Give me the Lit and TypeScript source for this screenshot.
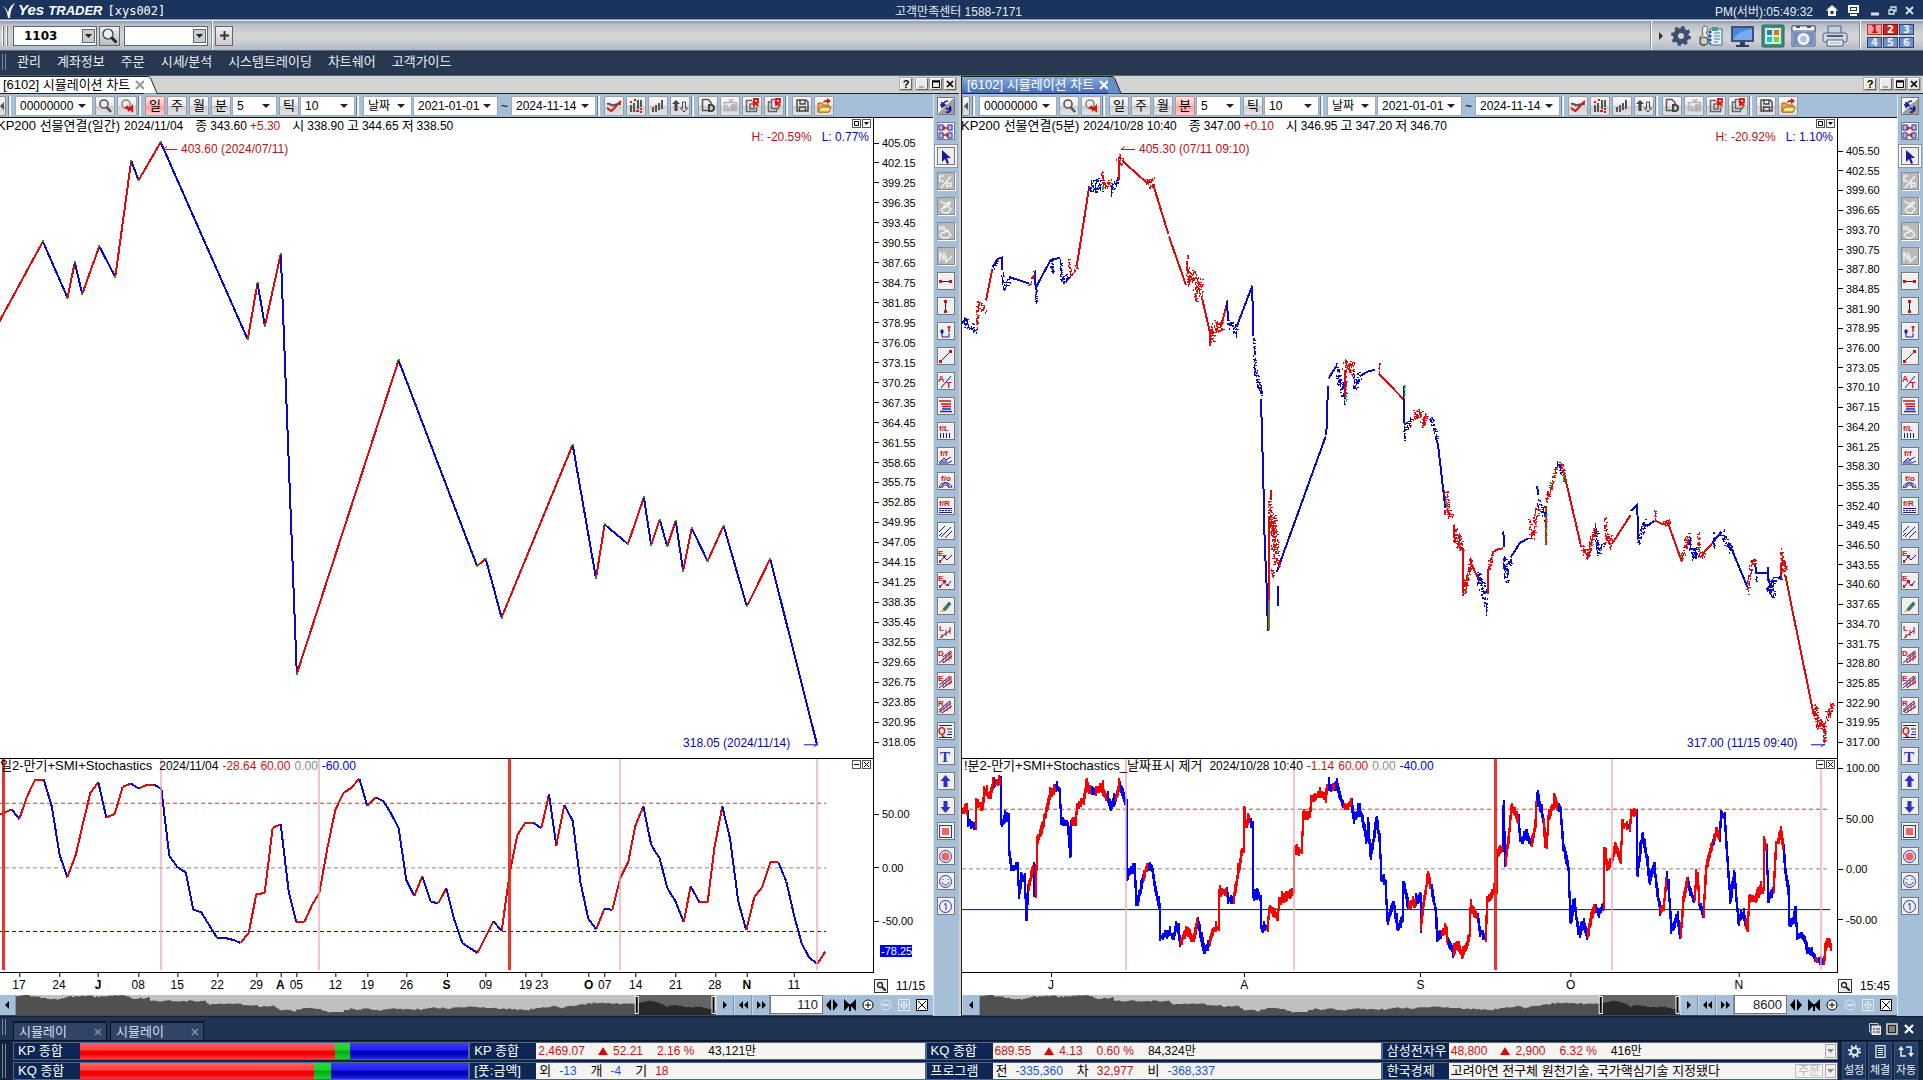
import { LitElement, html, svg, css, nothing } from "lit";
import { customElement, property } from "lit/decorators.js";
import { classMap } from "lit/directives/class-map.js";

const RED = "#e00808";
const BLUE = "#0808c8";

/* ---------- shared styles ---------- */
const base = css`
  * { box-sizing: border-box; }
  button, select, input {
    font: inherit; margin: 0; padding: 0; border: 0; border-radius: 0; color: inherit;
    background: none; appearance: none; outline: none; min-width: 0;
  }
  button { display: inline-flex; align-items: center; justify-content: center; flex: none; }
  a { color: inherit; text-decoration: none; }
  svg { display: block; flex: none; }
`;

/* ---------- icons ---------- */
const icon = (w: number, h: number, body: unknown) =>
  html`<svg width=${w} height=${h} viewBox="0 0 ${w} ${h}" fill="none" aria-hidden="true">${body}</svg>`;

const magnifier = (c = "#555") => svg`
  <circle cx="6" cy="5" r="4" stroke=${c} stroke-width="1.6" fill="#eee"/>
  <path d="M9 8.5L13 13" stroke=${c} stroke-width="2.6"/>`;

const triangle = (d: string) => svg`<path d=${d} fill="#000"/>`;

const tool = {
  search: icon(14, 14, magnifier()),
  searchRed: icon(14, 14, svg`${magnifier("#888")}<path d="M4 9l4-3v2h2l3-3v8l-3-2-2 2V11z" fill="#e01010"/>`),
  trend: icon(16, 14, svg`<path d="M1 5c3-1 4 2 7 1s4-1 7-1" stroke="#555" stroke-width="2"/><path d="M1 9l4 3c3-1 4-5 10-10" stroke="#d01818" stroke-width="2"/>`),
  barsDots: icon(14, 14, svg`<path d="M2 6v7M5 4v9M9 1v9M12 1v7" stroke="#555" stroke-width="2"/><path d="M1 3h2M5 1h2M7 12h3M11 10h2M11 13h2" stroke="#e01818" stroke-width="2"/>`),
  bars: icon(14, 14, svg`<path d="M2 8v5M5 6v7M8 4v7M11 1v9" stroke="#555" stroke-width="2"/>`),
  updown: icon(16, 14, svg`<path d="M4 12V3" stroke="#444" stroke-width="3"/><path d="M0 5l4-4 4 4z" fill="#444"/><path d="M10.500 3h3v6h2l-3.500 4-3.500-4h2z" stroke="#444"/>`),
  pageD: icon(15, 15, svg`<path d="M8 12.500H1.500v-11H7l3 3V7" stroke="#555" stroke-width="1.500"/><path d="M8 7v6h2c4 0 4-6 0-6z" stroke="#444" stroke-width="2"/>`),
  tvR: icon(15, 15, svg`<path d="M6 1l2 3 2-3M1.500 4.500h12v8h-12zM4 7v4h3" stroke="#b5b5b5" stroke-width="1.500"/><path d="M9 13V7h3v3H9l4 3" stroke="#aaa" stroke-width="1.500"/>`),
  pageR: icon(15, 15, svg`<path d="M7 2.500H1.500v11h10V9M8 6H5v5h4V8" stroke="#666" stroke-width="1.500"/><path d="M9 8V1h4v3.500H9l4.500 3.500" stroke="#e01010" stroke-width="1.800"/>`),
  pagesR: icon(15, 15, svg`<path d="M8 1.500H4.500v9h7V8M4 4H1.500v9.500h8V11" stroke="#666" stroke-width="1.500"/><path d="M9 8V1h4v3.500H9l4.500 3.500" stroke="#e01010" stroke-width="1.800"/>`),
  save: icon(13, 13, svg`<path d="M1 1h9l2 2v9H1zM4 1v4h5V1M3.500 12V8h6v4" stroke="#444" stroke-width="1.400"/>`),
  open: icon(15, 15, svg`<path d="M1 14V5h4l1 2h6v7z" fill="#e8b040" stroke="#a06810"/><path d="M1 14l3-5h10l-2 5z" fill="#ffe38a" stroke="#a06810"/><path d="M6 5c0-3 3-3 4-3V0l4 3-4 3V4C8 4 7 4 6 5z" fill="#e01010"/>`),
};

const N = "#1a1a9c";
const R = "#cc1414";
const letter = (s: string, x = 1, y = 8, c = R, size = 9) =>
  svg`<text x=${x} y=${y} font-size=${size} font-weight="700" fill=${c} font-family="Liberation Sans">${s}</text>`;
const gray = (b: unknown) => svg`<g stroke="#f2f2f2" stroke-width="1.400">${b}</g>`;
const drawTools: { name: string; kind?: string; art: unknown }[] = [
  { name: "새로고침", kind: "split", art: svg`<path d="M2 6h6M4 3v5l3-2M5 8c0-3 1-6 5-6" stroke=${N} stroke-width="1.600"/><path d="M8 9l4 2v-4M12 8c2 3-1 6-4 5" stroke=${N} stroke-width="1.800"/>` },
  { name: "창 배열", art: svg`<rect x="1" y="1" width="4" height="5" stroke=${N}/><rect x="1" y="9" width="4" height="5" stroke=${N}/><rect x="10" y="1" width="4" height="5" stroke=${N}/><rect x="10" y="9" width="4" height="5" stroke=${N}/><path d="M3 0v15M12 0v15" stroke="#7b7bd0"/><path d="M5 4h5M5 11h5M6 2v4M9 9v4" stroke=${R} stroke-width="1.500"/>` },
  { name: "선택", kind: "on", art: svg`<path d="M4 1v12l3-3 2 5 2-1-2-5h4z" fill=${N}/>` },
  { name: "콜풋", kind: "off", art: gray(svg`<path d="M6 2H2v5h4M3 14L13 2M9 14V9h4v3H9"/>`) },
  { name: "지우기", kind: "off", art: gray(svg`<path d="M2 2l5 3 5-2v2L5 8M5 9l5-2 3 3-3 4H6l-3-3z"/>`) },
  { name: "손", kind: "off", art: gray(svg`<path d="M2 2v4M4 2v4M6 2v4h4M4 9l6-2 3 4-4 3H5l-3-3z"/>`) },
  { name: "패턴", kind: "off", art: gray(svg`<path d="M2 12V3l4 8V3M8 6v7l6-6"/>`) },
  { name: "수평선", art: svg`<path d="M2 7.500h11" stroke=${N}/><path d="M1 6h3v3H1zM11 6h3v3h-3z" fill=${R}/>` },
  { name: "수직선", art: svg`<path d="M7.500 2v11" stroke=${N}/><path d="M6 1h3v3H6zM6 11h3v3H6z" fill=${R}/>` },
  { name: "구간", art: svg`<path d="M4 9v4h7V9" stroke=${N}/><path d="M3 6h2v3H3z" fill=${N} stroke=${N}/><path d="M11 2v6M9.500 3h3" stroke=${R} stroke-width="1.500"/>` },
  { name: "추세선", art: svg`<path d="M3 12L12 3" stroke="#333"/><path d="M1 11h3v3H1zM11 1h3v3h-3z" fill=${R}/>` },
  { name: "각도선", art: svg`<path d="M3 14L13 2" stroke=${N}/>${letter("A", 0, 8)}${letter("T", 8, 14)}` },
  { name: "가로줄", art: svg`<path d="M1 2h12M3 5h10M4 7.500h9" stroke=${R} stroke-width="1.300"/><path d="M4 10h9M2 12.500h12" stroke="#2020e0" stroke-width="1.300"/>` },
  { name: "피보나치 시간", art: svg`${letter("f/L", 1, 7, R, 8)}<path d="M2.500 9v5M5.500 9v5M8.500 9v5M11.500 9v5" stroke=${N}/>` },
  { name: "피보나치 팬", art: svg`${letter("f/f", 2, 7, R, 8)}<path d="M1 14l5-5 2 2 5-3M1 14h9l4-2M3 12h6" stroke=${N}/>` },
  { name: "피보나치 호", art: svg`${letter("f/o", 3, 7, R, 8)}<path d="M1 14C2 7 13 7 14 14M4 14c1-4 6-4 7 0M7.500 8L2 14M7.500 8l5 6" stroke=${N}/>` },
  { name: "피보나치 되돌림", art: svg`${letter("f/R", 1, 7, R, 8)}<path d="M1 9.500h13M1 13.500h13" stroke=${N}/><path d="M1 11.500h13" stroke=${N} stroke-dasharray="2 1"/>` },
  { name: "평행선", art: svg`<path d="M1 8l6-6M3 13L13 3M7 14l7-7M1 12l3-3" stroke=${N}/>` },
  { name: "엘리어트 1", art: svg`${letter("E", 0, 7, R, 8)}<path d="M2 13l4-5 3 3 5-5" stroke=${N}/><path d="M1 11h2v3H1zM5 6h3v2H5z" fill=${R}/>` },
  { name: "엘리어트 2", art: svg`${letter("E", 0, 7, R, 8)}<path d="M2 13l4-5 3 4 4-5" stroke=${N}/><path d="M1 11h2v3H1zM5 6h3v3H5zM9 10h2v2H9z" fill=${R}/>` },
  { name: "펜", art: svg`<path d="M5 10l6-7 2 2-6 7z" fill="#2c8070" stroke="#666"/><path d="M2 13l3-3 2 2z" fill="#c9a030"/>` },
  { name: "선형회귀 L", art: svg`${letter("L", 1, 7, R, 8)}<path d="M2 14l5-4 6-4" stroke=${N}/><path d="M4 10v4M8 6v6M12 3v7" stroke=${R}/>` },
  { name: "선형회귀 D", art: svg`${letter("D", 0, 7, R, 8)}<path d="M1 14L13 4M5 8l8-6M5 14l9-7" stroke=${N}/><path d="M5 9v5M8 5v8M11 3v9M13 2v8" stroke=${R}/>` },
  { name: "선형회귀 E", art: svg`${letter("E", 0, 7, R, 8)}<path d="M1 14L13 4M1 11L12 2M5 14l9-7" stroke=${N}/><path d="M5 8v5M8 5v7M11 3v8M13 2v8" stroke=${R}/>` },
  { name: "선형회귀 R", art: svg`${letter("R", 0, 7, R, 8)}<path d="M1 13L13 4M1 11L12 2M4 14l10-7" stroke=${N}/><path d="M3 10v4M6 8v5M9 4v8M12 2v8" stroke=${R}/>` },
  { name: "사분위", art: svg`<path d="M1 1.500h13M1 13.500h13M9 5h5M10 8h4M9 10.500h5" stroke=${N}/>${letter("Q", 0, 11, R, 10)}` },
  { name: "텍스트", art: svg`<text x="2" y="13" font-size="15" font-weight="700" fill="#3030c0" font-family="Liberation Serif">T</text>` },
  { name: "위 화살표", art: svg`<path d="M7.500 1l5 6h-3v6h-4V7h-3z" fill="#3030c0"/>` },
  { name: "아래 화살표", art: svg`<path d="M7.500 14l5-6h-3V2h-4v6h-3z" fill="#3030c0"/>` },
  { name: "사각형", art: svg`<rect x="1.500" y="1.500" width="12" height="12" stroke="#3030c0"/><rect x="4" y="4" width="7" height="7" fill="#ee6464"/>` },
  { name: "원", art: svg`<circle cx="7.500" cy="7.500" r="6" stroke="#3030c0"/><circle cx="7.500" cy="7.500" r="4" fill="#ee6464"/>` },
  { name: "스마일", art: svg`<circle cx="7.500" cy="7.500" r="6" stroke="#3030c0"/><path d="M4 8c1 4 6 4 7 0M5 5v1M10 5v1" stroke="#3030c0"/>` },
  { name: "번호", art: svg`<circle cx="7.500" cy="7.500" r="6" stroke="#3030c0"/><path d="M6 5.500l2-1V11" stroke="#3030c0"/>` },
];

/* ---------- chart data ---------- */
type Pt = [number, number];
type Run = { c: "r" | "b" | "g"; p: Pt[] };

function rng(seed: number) {
  let s = seed;
  return () => ((s = (s * 16807) % 2147483647) / 2147483647);
}
const flat = (a: number[]): Pt[] => {
  const out: Pt[] = [];
  for (let i = 0; i < a.length; i += 2) out.push([a[i], a[i + 1]]);
  return out;
};
const K = 1923 / 1568;
const dailyPrice = flat([
  -3, 267, 35, 197, 55, 243, 61, 214, 67, 240, 81, 201, 94, 226, 107, 131, 113, 147, 131, 116, 202, 277, 210, 231,
  216, 266, 229, 207, 242, 550, 325, 294, 389, 462, 396, 456, 409, 504, 467, 363, 486, 472, 493, 428, 512, 444,
  525, 406, 531, 445, 538, 424, 544, 446, 551, 425, 557, 466, 564, 431, 577, 458, 590, 429, 609, 495, 628, 456, 666, 607,
]).map(([x, y]): Pt => [x * K, y * K]);

const dailyOsc = flat([
  -6, 214, 0, 212, 35, 197, 58, 226, 82, 156, 106, 107, 131, 107, 155, 187, 179, 335, 202, 402, 227, 335, 250, 235, 271, 148, 295, 115,
  319, 221, 344, 211, 368, 129, 392, 119, 416, 134, 441, 123, 462, 123, 484, 134, 508, 337, 532, 371, 557, 387, 580, 499,
  604, 508, 651, 584, 676, 585, 700, 591, 722, 600, 746, 569, 769, 454, 794, 449, 818, 252, 842, 242, 866, 445, 889, 537,
  913, 537, 937, 484, 958, 449, 982, 315, 1006, 199, 1030, 148, 1054, 132, 1078, 104, 1102, 187, 1127, 161, 1150, 172,
  1172, 207, 1196, 255, 1219, 410, 1243, 458, 1267, 399, 1292, 476, 1315, 480, 1339, 435, 1363, 530, 1387, 600, 1432, 630,
  1440, 615, 1480, 535, 1505, 563, 1529, 390, 1552, 275, 1576, 237, 1600, 237, 1624, 254, 1647, 152, 1669, 306, 1693, 183,
  1718, 232, 1741, 415, 1765, 527, 1789, 559, 1813, 497, 1837, 500, 1861, 404, 1885, 355, 1906, 247, 1930, 188, 1954, 305,
  1979, 345, 2002, 435, 2026, 473, 2051, 537, 2072, 429, 2098, 477, 2123, 477, 2143, 315, 2167, 188, 2190, 285, 2215, 475,
  2239, 562, 2263, 462, 2287, 431, 2311, 357, 2335, 357, 2359, 415, 2383, 520, 2405, 602, 2428, 645, 2452, 663, 2476, 626,
]).map(([x, y]): Pt => [x / 3, 745 + y / 3]);

const slopeRuns = (pts: Pt[]): Run[] =>
  pts.slice(1).map((p, i) => ({ c: p[1] <= pts[i][1] ? "r" : "b", p: [pts[i], p] }));

/* solid strokes of the five-minute price line, three units to a pixel */
const minuteLines: [string, number[]][] = [
  ["b", [6, 580, 18, 568, 25, 572]], ["r", [78, 512, 97, 418]], ["b", [98, 412, 112, 388, 125, 383, 126, 420]],
  ["b", [148, 442, 208, 461]], ["b", [224, 422, 227, 474, 272, 390, 300, 384]], ["r", [350, 410, 388, 168]],
  ["r", [477, 150, 477, 92]], ["r", [487, 92, 562, 160]], ["r", [580, 165, 625, 312]], ["r", [627, 320, 678, 466]],
  ["r", [726, 505, 751, 612, 751, 650]], ["r", [783, 590, 801, 520]], ["b", [801, 512, 804, 575]],
  ["b", [830, 590, 877, 468, 879, 618]], ["b", [903, 808, 910, 1050, 914, 1240, 922, 1412, 923, 1504]],
  ["r", [927, 1160, 927, 1412]], ["r", [933, 1080, 933, 1110]], ["b", [954, 1370, 954, 1430]],
  ["b", [950, 1328, 960, 1300, 1097, 920]], ["b", [1099, 915, 1104, 768]], ["b", [1106, 746, 1128, 710]],
  ["r", [1154, 805, 1156, 720]], ["b", [1199, 740, 1222, 726, 1246, 720]], ["r", [1256, 732, 1330, 808]],
  ["b", [1332, 770, 1332, 880]], ["b", [1410, 866, 1416, 880]],
  ["b", [1426, 920, 1434, 945, 1456, 1135]], ["r", [1456, 1140, 1456, 1156]], ["r", [1482, 1185, 1484, 1240]],
  ["r", [1502, 1255, 1508, 1260, 1508, 1390]], ["r", [1532, 1300, 1556, 1350]], ["r", [1584, 1395, 1584, 1320]],
  ["r", [1596, 1270, 1612, 1260, 1630, 1256]], ["b", [1630, 1206, 1633, 1252]],
  ["b", [1652, 1284, 1680, 1240, 1706, 1226]], ["b", [1732, 1070, 1734, 1095]], ["r", [1758, 1130, 1758, 1245]],
  ["r", [1812, 1030, 1862, 1245]], ["r", [1880, 1290, 1890, 1268]], ["r", [1958, 1240, 2012, 1156]],
  ["b", [2012, 1144, 2032, 1126, 2034, 1230]], ["b", [2060, 1190, 2084, 1174]],
  ["r", [2084, 1172, 2110, 1185, 2124, 1180, 2165, 1296]], ["r", [2226, 1276, 2258, 1240]],
  ["b", [2258, 1240, 2284, 1206]], ["b", [2312, 1252, 2362, 1372]], ["b", [2386, 1305, 2388, 1332, 2424, 1332]],
  ["b", [2424, 1314, 2426, 1360]], ["r", [2464, 1300, 2464, 1350]], ["r", [2476, 1338, 2562, 1760]],
];
/* dotted clusters: color, x0, y0, x1, y1, spread x, spread y, count */
const minuteDots: [string, number, number, number, number, number, number, number][] = [
  ["b", 10, 572, 45, 605, 8, 12, 34], ["r", 48, 590, 52, 520, 3, 8, 24], ["r", 52, 520, 74, 535, 5, 14, 26],
  ["b", 98, 410, 112, 390, 4, 8, 12], ["b", 126, 420, 130, 475, 3, 8, 20], ["b", 130, 470, 150, 445, 4, 14, 22],
  ["r", 206, 460, 222, 430, 3, 10, 16], ["b", 227, 474, 227, 520, 3, 4, 16], ["b", 272, 395, 280, 430, 4, 8, 20],
  ["b", 300, 390, 304, 455, 3, 8, 24], ["b", 304, 450, 328, 440, 4, 12, 22], ["r", 326, 385, 328, 440, 2, 4, 14],
  ["r", 330, 430, 350, 405, 4, 8, 16], ["b", 388, 165, 424, 165, 6, 20, 60], ["r", 426, 125, 428, 170, 3, 6, 26],
  ["r", 430, 165, 452, 155, 4, 10, 22], ["b", 452, 165, 454, 198, 2, 4, 12], ["b", 454, 175, 476, 150, 3, 12, 20],
  ["r", 474, 85, 486, 95, 5, 10, 18], ["r", 478, 70, 478, 80, 1, 3, 5], ["r", 560, 160, 580, 155, 5, 14, 34],
  ["r", 680, 380, 684, 466, 5, 8, 46], ["r", 690, 430, 724, 480, 8, 26, 86], ["r", 704, 490, 708, 515, 3, 4, 12],
  ["r", 751, 600, 760, 630, 5, 16, 34], ["r", 762, 585, 784, 592, 6, 16, 44], ["b", 804, 580, 828, 600, 4, 14, 34],
  ["b", 828, 600, 828, 618, 1, 2, 6], ["b", 880, 630, 884, 720, 3, 8, 34], ["b", 884, 720, 902, 795, 5, 14, 44],
  ["r", 926, 1110, 932, 1190, 5, 10, 44], ["r", 936, 1160, 948, 1290, 9, 24, 150], ["r", 934, 1320, 938, 1345, 3, 4, 16],
  ["r", 954, 1290, 956, 1316, 2, 3, 12], ["b", 1128, 700, 1130, 712, 2, 4, 6], ["b", 1130, 730, 1150, 790, 5, 24, 54],
  ["b", 1152, 800, 1152, 828, 1, 3, 9], ["r", 1152, 705, 1178, 715, 5, 20, 54], ["r", 1155, 730, 1155, 800, 2, 5, 26],
  ["b", 1180, 725, 1182, 780, 3, 5, 20], ["b", 1184, 770, 1200, 730, 4, 12, 22], ["r", 1256, 700, 1256, 722, 1, 3, 8],
  ["b", 1332, 880, 1332, 932, 2, 3, 16], ["b", 1334, 890, 1354, 870, 4, 14, 26], ["r", 1358, 855, 1384, 845, 4, 14, 38],
  ["r", 1384, 880, 1400, 860, 5, 14, 36], ["b", 1414, 870, 1430, 925, 4, 10, 30], ["r", 1456, 1090, 1466, 1155, 5, 14, 44],
  ["r", 1466, 1150, 1480, 1156, 3, 3, 8], ["r", 1484, 1215, 1504, 1250, 6, 26, 62], ["r", 1508, 1390, 1520, 1350, 5, 14, 50],
  ["r", 1520, 1345, 1532, 1290, 4, 14, 40], ["b", 1552, 1340, 1578, 1410, 5, 22, 70], ["b", 1578, 1420, 1579, 1455, 1, 4, 10],
  ["r", 1584, 1320, 1596, 1270, 4, 8, 28], ["b", 1632, 1290, 1640, 1350, 6, 16, 52], ["b", 1642, 1310, 1654, 1285, 3, 12, 16],
  ["r", 1708, 1170, 1712, 1225, 4, 6, 20], ["r", 1716, 1220, 1732, 1130, 5, 16, 48], ["b", 1734, 1110, 1756, 1160, 4, 14, 30],
  ["g", 1757, 1140, 1757, 1245, 2, 4, 12], ["r", 1757, 1110, 1775, 1060, 4, 14, 40], ["r", 1775, 1060, 1786, 1010, 4, 10, 26],
  ["b", 1792, 995, 1806, 1030, 4, 10, 24], ["r", 1804, 1000, 1812, 1050, 4, 8, 30], ["g", 1808, 1030, 1810, 1050, 2, 4, 8],
  ["r", 1862, 1250, 1884, 1285, 5, 10, 26], ["r", 1884, 1270, 1904, 1190, 5, 16, 50], ["b", 1906, 1190, 1914, 1270, 5, 14, 40],
  ["b", 1914, 1265, 1932, 1240, 4, 12, 18], ["r", 1934, 1160, 1938, 1240, 4, 8, 28], ["r", 1940, 1215, 1956, 1240, 5, 20, 38],
  ["b", 2034, 1230, 2036, 1242, 2, 4, 8], ["b", 2036, 1220, 2056, 1170, 5, 14, 34], ["r", 2084, 1140, 2084, 1166, 1, 2, 10],
  ["r", 2112, 1180, 2128, 1175, 4, 10, 26], ["r", 2164, 1290, 2184, 1210, 5, 14, 44], ["b", 2186, 1220, 2192, 1270, 4, 16, 36],
  ["b", 2196, 1275, 2212, 1265, 5, 14, 34], ["r", 2212, 1210, 2216, 1270, 4, 8, 22], ["r", 2216, 1275, 2232, 1275, 4, 8, 20],
  ["b", 2260, 1206, 2260, 1256, 2, 4, 14], ["b", 2284, 1206, 2312, 1260, 6, 16, 50], ["r", 2362, 1385, 2370, 1310, 4, 10, 34],
  ["r", 2370, 1300, 2386, 1295, 4, 10, 24], ["b", 2388, 1340, 2388, 1360, 2, 4, 8], ["b", 2424, 1370, 2440, 1380, 6, 26, 70],
  ["b", 2436, 1350, 2462, 1346, 4, 6, 20], ["r", 2462, 1262, 2468, 1340, 4, 8, 28], ["r", 2466, 1290, 2478, 1320, 3, 12, 22],
  ["r", 2562, 1730, 2574, 1785, 6, 14, 50], ["r", 2574, 1780, 2594, 1790, 5, 14, 46], ["r", 2592, 1800, 2592, 1838, 4, 6, 30],
  ["r", 2600, 1760, 2616, 1730, 5, 16, 50], ["g", 426, 170, 428, 178, 2, 3, 5], ["g", 1154, 800, 1156, 810, 2, 3, 5],
  ["g", 1332, 768, 1332, 806, 1, 3, 8], ["g", 1456, 1115, 1458, 1140, 2, 3, 5],
];

const minuteOscSrc = `r 6 205 14 190 20 205 b 22 235 45 250 r 48 175 66 190 72 140 90 155 98 115 b 104 120 r 112 115 121 110
b 124 235 145 215 148 330 155 375 170 370 175 460 183 405 193 405 198 520 203 430 r 213 400 220 370 b 224 450
r 230 290 250 230 262 190 272 150 285 135 b 296 140 303 230 320 240 329 330 332 230 r 345 235 352 185 368 170 376 120 390 140
b 405 140 r 424 130 440 160 b 452 190 465 165 r 476 120 b 490 160 498 180 501 400 523 370 530 480 548 400 r 561 370
b 575 380 585 440 598 490 602 580 622 570 640 580 650 550 660 600 r 678 560 700 590 711 530 b 722 590 732 625 748 600
r 760 560 775 555 778 450 798 445 b 803 470 820 470 r 835 385 848 320 851 200 855 245 868 225 b 875 240 877 460 900 460 904 555 922 555
r 928 500 952 520 958 475 985 455 1000 445 1003 320 1022 325 1028 215 1048 215 1055 170 1078 145 1095 165 1102 125
b 1115 130 r 1122 130 b 1128 115 1140 160 1150 185 r 1160 185 1172 175 b 1180 230 1198 195 1212 250 1218 290 1225 240 1230 340 1240 290
1248 225 1256 280 1262 400 1275 420 1281 530 1298 480 1310 555 1325 530 1329 420 1345 490 r 1365 480 b 1380 460 1381 560
r 1390 480 1405 395 1412 430 b 1425 500 1430 590 1442 570 r 1457 560 1460 590 b 1478 630 r 1490 600 1506 640 1528 580 1531 495 1552 520
b 1562 570 1576 590 r 1583 470 1600 435 1607 440 1611 330 1626 315 b 1629 190 1636 360 r 1645 290 1654 190 1675 225
b 1682 290 1695 270 1713 300 r 1725 240 1728 180 b 1731 150 1750 230 r 1757 310 1762 230 1778 190 1782 160 1790 185
b 1800 195 1810 310 1825 375 1831 535 1843 480 1856 570 1868 540 1881 580 r 1892 520 1905 490 b 1915 510 1930 495
r 1932 320 1940 370 1956 350 1965 310 1980 350 1986 240 2000 245 b 2008 250 r 2015 210 2028 200 b 2032 390 2046 275 2058 340
2068 410 2082 370 2090 450 2100 505 r 2110 500 2118 410 b 2125 430 2135 560 2150 520 2160 580 r 2168 470 2180 410
b 2190 450 2203 470 r 2210 400 2215 480 b 2230 510 r 2238 370 2255 300 b 2260 290 r 2268 260 2278 280 b 2283 210 2292 210 2302 350
2311 470 2322 390 2335 540 2345 510 2355 540 r 2361 560 2368 465 2385 470 2400 440 2408 440 2412 290 2418 310 b 2425 470 2440 440
r 2450 300 2460 260 2470 310 b 2475 380 2483 440 2486 540 2500 530 2506 500 2513 580 2528 580 2540 620 2565 645
r 2570 650 b 2588 655 r 2593 630 2603 595 2612 615`;

/* Expands the waypoints into one short vertical stroke for each pixel column. */
function minuteOsc(): { r: string; b: string } {
  const out = { r: "", b: "" };
  const rand = rng(4177);
  const t = minuteOscSrc.split(/\s+/);
  let c: "r" | "b" = "r";
  let prev: Pt | null = null;
  for (let i = 0; i < t.length; ) {
    if (t[i] === "r" || t[i] === "b") { c = t[i] as "r" | "b"; i++; continue; }
    const cur: Pt = [960 + +t[i] / 3, 745 + +t[i + 1] / 3];
    i += 2;
    if (prev) {
      const n = Math.max(1, Math.round(cur[0] - prev[0]));
      for (let k = 0; k < n; k++) {
        const x = Math.round(prev[0] + k + 1);
        const y0 = prev[1] + ((cur[1] - prev[1]) * k) / n;
        const y1 = prev[1] + ((cur[1] - prev[1]) * (k + 1)) / n;
        const spike = rand() > 0.9 ? 4 : 0;
        const a = Math.round(Math.min(y0, y1) - 1 - rand() * 4 - spike);
        const b = Math.round(Math.max(y0, y1) + 1 + rand() * 4);
        out[c] += `M${x} ${a}V${b}`;
      }
    }
    prev = cur;
  }
  return out;
}

function minutePrice() {
  const px = (p: Pt): Pt => [960 + p[0] / 3, 130 + p[1] / 3];
  const lines: Run[] = minuteLines.map(([c, a]) => ({ c: c as Run["c"], p: flat(a).map(px) }));
  const dots = { r: "", b: "", g: "" };
  const rand = rng(90210);
  for (const [c, x0, y0, x1, y1, sx, sy, n] of minuteDots) {
    for (let i = 0; i < n; i++) {
      const f = i / n;
      const [x, y] = px([x0 + (x1 - x0) * f + (rand() * 2 - 1) * sx, y0 + (y1 - y0) * f + (rand() * 2 - 1) * sy]);
      dots[c as Run["c"]] += rand() > 0.5
        ? `M${Math.round(x)} ${Math.round(y)}h2v1h-2z`
        : `M${Math.round(x)} ${Math.round(y)}h1v2h-1z`;
    }
  }
  return { lines, dots };
}

const ink = { r: RED, b: BLUE, g: "#20a020" };
const drawRuns = (runs: Run[]) =>
  runs.map((r) => svg`<polyline points=${r.p.map((q) => q.map((v) => Math.round(v * 10) / 10).join(",")).join(" ")} stroke=${ink[r.c]} />`);

const silhouette = flat([
  45, 758, 70, 753, 110, 758, 165, 765, 205, 757, 260, 755, 290, 758, 330, 754, 378, 755, 390, 764, 440, 760, 450, 770, 520, 770, 610, 769,
  625, 782, 640, 778, 700, 778, 730, 782, 765, 782, 780, 788, 820, 785, 840, 797, 880, 800, 900, 794, 930, 790, 965, 797,
  985, 806, 1015, 804, 1050, 794, 1080, 796, 1100, 792, 1140, 800, 1170, 792, 1260, 796, 1290, 790, 1350, 792, 1380, 787,
  1440, 790, 1500, 793, 1550, 795, 1575, 798, 1600, 793, 1660, 786, 1680, 792, 1720, 783, 1780, 776, 1840, 778, 1905, 778,
  1920, 773, 1950, 770, 1985, 777, 2000, 786, 2040, 783, 2060, 790, 2100, 788, 2150, 797,
]).map(([x, y]): Pt => [x / 3 - 15, (y - 753) / 3]);

function silhouettePath() {
  const rand = rng(77);
  let d = "M0 20";
  for (let i = 1; i < silhouette.length; i++) {
    const [x0, y0] = silhouette[i - 1];
    const [x1, y1] = silhouette[i];
    for (let x = x0; x < x1; x += 3) {
      const y = y0 + ((y1 - y0) * (x - x0)) / (x1 - x0);
      d += `L${x.toFixed(1)} ${(y + rand() * 1.4 - 0.4).toFixed(1)}h2`;
    }
  }
  return d + "L702 20Z";
}

interface ChartSpec {
  active: boolean;
  origin: number;
  period: string;
  symbol: string;
  date: string;
  close: string;
  change: string;
  ohl: [string, string][];
  highPct: string;
  lowPct: string;
  high: { text: string; x: number; y: number; ax: number };
  low: { text: string; x: number; y: number; ax: number };
  priceTop: number;
  priceStart: number;
  priceStep: number;
  ind: { name: string; date: string; value: string; upper: string; mid: string; lower: string };
  indLabels: string[];
  indPad: [number, number];
  badge?: string;
  levels: { y: number; c: string; dash: boolean }[];
  bands: { x: number; strong: boolean }[];
  plotEnd: number;
  xTicks: [number, string, boolean?][];
  lastTime: string;
  count: string;
  price: () => unknown;
  osc: () => unknown;
}

const daily: ChartSpec = {
  active: false, origin: -2, period: "일",
  symbol: "KP200 선물연결(일간)", date: "2024/11/04", close: "343.60", change: "+5.30",
  ohl: [["시", "338.90"], ["고", "344.65"], ["저", "338.50"]],
  highPct: "H: -20.59%", lowPct: "L: 0.77%",
  high: { text: "403.60 (2024/07/11)", x: 181, y: 149, ax: 163 },
  low: { text: "318.05 (2024/11/14)", x: 683, y: 744, ax: 804 },
  priceTop: 18, priceStart: 405.05, priceStep: 2.9,
  ind: { name: "일2-만기+SMI+Stochastics", date: "2024/11/04", value: "-28.64", upper: "60.00", mid: "0.00", lower: "-60.00" },
  indLabels: ["50.00", "0.00", "-50.00"], indPad: [48, 45], badge: "-78.25",
  levels: [{ y: 804, c: "#e03030", dash: true }, { y: 869, c: "#888", dash: true }, { y: 933, c: "#0000e0", dash: true }],
  bands: [{ x: 3, strong: true }, { x: 161, strong: false }, { x: 319, strong: false }, { x: 509, strong: true }, { x: 620, strong: false }, { x: 817, strong: false }],
  plotEnd: 826,
  xTicks: [[19, "17"], [59, "24"], [98, "J", true], [138, "08"], [177, "15"], [217, "22"], [256, "29"], [280, "A", true], [296, "05"], [335, "12"], [367, "19"], [406, "26"], [446, "S", true], [485, "09"], [525, "19"], [541, "23"], [588, "O", true], [604, "07"], [635, "14"], [675, "21"], [714, "28"], [746, "N", true], [793, "11"]],
  lastTime: "11/15", count: "110",
  price: () => svg`<g stroke-width="2">${drawRuns(slopeRuns(dailyPrice))}</g>
    <g fill="#20a020">${dailyPrice.slice(1, -1).map(([x, y]) => svg`<rect x=${x - 1} y=${y - 1} width="2" height="2"/>`)}</g>`,
  osc: () => svg`<g stroke-width="2">${drawRuns(slopeRuns(dailyOsc))}</g>`,
};

const minute: ChartSpec = {
  active: true, origin: 962, period: "분",
  symbol: "KP200 선물연결(5분)", date: "2024/10/28 10:40", close: "347.00", change: "+0.10",
  ohl: [["시", "346.95"], ["고", "347.20"], ["저", "346.70"]],
  highPct: "H: -20.92%", lowPct: "L: 1.10%",
  high: { text: "405.30 (07/11 09:10)", x: 1139, y: 149, ax: 1121 },
  low: { text: "317.00 (11/15 09:40)", x: 1687, y: 744, ax: 1811 },
  priceTop: 26, priceStart: 405.5, priceStep: 2.95,
  ind: { name: "!분2-만기+SMI+Stochastics_날짜표시 제거", date: "2024/10/28 10:40", value: "-1.14", upper: "60.00", mid: "0.00", lower: "-40.00" },
  indLabels: ["100.00", "50.00", "0.00", "-50.00"], indPad: [2, 46],
  levels: [{ y: 810, c: "#e03030", dash: true }, { y: 870, c: "#888", dash: true }, { y: 911, c: "#0000e0", dash: false }],
  bands: [{ x: 1126, strong: false }, { x: 1294, strong: false }, { x: 1495, strong: true }, { x: 1612, strong: false }, { x: 1821, strong: false }],
  plotEnd: 1830,
  xTicks: [[1051, "J"], [1244, "A"], [1420, "S"], [1570, "O"], [1738, "N"]],
  lastTime: "15:45", count: "8600",
  price: () => {
    const { lines, dots } = minutePrice();
    return svg`<g stroke-width="2">${drawRuns(lines)}</g>
      <path d="M1269 601V631" stroke="#7a7a10" stroke-width="2"/>
      <path d=${dots.b} fill=${BLUE}/><path d=${dots.r} fill=${RED}/><path d=${dots.g} fill="#20c020"/>`;
  },
  osc: () => {
    const o = minuteOsc();
    return svg`<path d=${o.b} stroke="#0000fa" stroke-width="2"/><path d=${o.r} stroke="#fa0000" stroke-width="2"/>`;
  },
};

/* ---------- combo box ---------- */
@customElement("drop-box")
class DropBox extends LitElement {
  @property() value = "";
  @property() label = "";
  static styles = [base, css`
    :host { display: block; position: relative; height: 20px; flex: none; }
    select { width: 100%; height: 20px; padding: 0 4px; background: #fff; border: 1px solid #9cacba; font-size: 12px; color: #000; line-height: 18px; display: block; }
    .arrow { position: absolute; right: 7px; top: 8px; border: 4px solid transparent; border-top-color: #222; border-bottom: 0; pointer-events: none; }
  `];
  render() {
    return html`<select aria-label=${this.label}><option>${this.value}</option></select><span class="arrow"></span>`;
  }
}

/* ---------- chart window ---------- */
@customElement("chart-window")
class ChartWindow extends LitElement {
  @property({ attribute: false }) spec!: ChartSpec;

  static styles = [base, css`
    :host { display: grid; grid-template-rows: 18px minmax(0, 1fr); padding-left: 3px; background: linear-gradient(90deg, #d4d0c8 2px, #222 2px, #222 3px, #fff 3px); min-width: 0; min-height: 0; font-size: 12px; }
    .caption { display: flex; align-items: stretch; background: #d3d3d3; border-bottom: 1px solid #222; }
    .tab { display: flex; align-items: center; gap: 5px; padding-left: 5px; font-size: 13px; white-space: nowrap; background: #fff; border-top: 1px solid #222; line-height: 16px; }
    .tab.active { background: linear-gradient(#86abde, #4470b4); color: #fff; }
    .tail { margin-left: -1px; }
    .fill { flex: 1; }
    .controls { display: flex; gap: 2px; padding: 2px 3px 0 0; }
    .controls button { width: 12px; height: 12px; background: #eceae4; border: 1px solid; border-color: #fff #666 #666 #fff; outline: 1px solid #aaa; outline-offset: 0; }
    .controls button:first-child { margin-right: 2px; font-weight: 700; font-size: 11px; line-height: 10px; }
    .body { display: grid; grid-template-columns: 1fr 26px; grid-template-rows: minmax(0, 1fr); min-height: 0; }
    .main { display: flex; flex-direction: column; min-width: 0; min-height: 0; background: #fff; }
    .tools { display: flex; align-items: center; gap: 2px; height: 24px; flex: none; background: #a5bfd8; border-bottom: 1px solid #111; overflow: hidden; white-space: nowrap; }
    .tools button { width: 20px; height: 20px; border: 1px solid #96a0aa; border-radius: 2px; background: linear-gradient(#fcfcfc, #e9e9e9 50%, #cfcfcf 51%, #e4e4e4); font-size: 13px; line-height: 16px; }
    .tools .on { background: linear-gradient(#ffe9e9, #ffb4b4 50%, #ff9c9c 51%, #ffd0d0); border-color: #c89090; }
    .tools .scroll { width: 8px; margin-right: 1px; border-color: #888; }
    .sep { width: 3px; height: 20px; margin: 0 2px 0 -1px; border-left: 1px solid #6e8295; border-right: 1px solid #fff; background: #dde6ee; }
    .w78 { width: 78px; } .w45 { width: 45px; } .w55 { width: 55px; } .w49 { width: 49px; } .w86 { width: 85px; }
    .tight { margin-left: -1px; }
    .tilde { width: 9px; text-align: center; }
    .drawing { background: #a5bfd8; display: flex; flex-direction: column; align-items: center; gap: 7px; padding: 3px 2px 0 0; border-left: 1px solid #dfe8f0; }
    .drawing button { width: 18px; height: 18px; background: #efefef; border: 1px solid #777; box-shadow: inset 1px 1px #fff; }
    .drawing .split { background: linear-gradient(135deg, #f4f4f4 50%, #a0a0a0 50%); }
    .drawing .off { background: #b9b9b9; border-color: #8a8a8a; box-shadow: 1px 1px #fff; }
    .drawing .on { box-shadow: 0 0 0 2px #f4f7fa, 0 0 0 3px #8d9aa6; }
    .charts { flex: 1; display: grid; grid-template-columns: 1fr 59px; grid-template-rows: minmax(0, 642fr) minmax(0, 214fr) 22px; min-height: 0; }
    .plot { position: relative; min-width: 0; min-height: 0; overflow: hidden; border-right: 1px solid #000; border-bottom: 1px solid #000; }
    .plot > svg { width: 100%; height: 100%; }
    .legend { position: absolute; left: -1px; top: 0; display: flex; gap: 4px; line-height: 16px; white-space: nowrap; }
    .main-legend { gap: 3px; }
    .main-legend .name { margin-right: 1px; font-size: 13px; }
    .k { font-size: 13px; }
    .lead { margin-left: 9px; }
    .legend.sub { top: -1px; left: 2px; }
    .legend.sub .name { margin-right: 3px; font-size: 13px; }
    .n { font-size: 12px; }
    .red { color: #b81414; } .blue { color: #0808a8; } .mid { color: #8a8a8a; } .bright { color: #d01010; } .deep { color: #0000c8; }
    .extent { position: absolute; right: 4px; top: 11px; display: flex; gap: 10px; line-height: 16px; }
    .mini { position: absolute; right: 2px; top: 1px; display: flex; gap: 1px; }
    .mini button { width: 9px; height: 9px; background: #fff; border: 1px solid #555; }
    .note { position: absolute; line-height: 16px; transform: translateY(-50%); white-space: nowrap; }
    .axis { display: flex; flex-direction: column; justify-content: space-between; line-height: 14px; font-size: 11px; min-height: 0; position: relative; }
    .axis span { display: flex; align-items: center; gap: 3px; height: 14px; }
    .axis span::before { content: ""; width: 5px; height: 1px; background: #000; }
    .axis .badge { position: absolute; top: 186px; left: 6px; background: #0000f0; color: #fff; height: 12px; line-height: 12px; padding-left: 1px; }
    .axis .badge::before { display: none; }
    .times { position: relative; line-height: 16px; }
    .times span { position: absolute; top: 0; transform: translateX(-50%); padding-top: 4px; }
    .times span::before { content: ""; position: absolute; left: 50%; top: 0; width: 1px; height: 4px; background: #000; }
    .times .month { font-weight: 700; }
    .last { display: flex; align-items: center; gap: 8px; white-space: nowrap; padding-top: 4px; }
    .last button { width: 14px; height: 14px; border: 1px solid #333; background: #eee; box-shadow: inset 1px 1px #fff; }
    .nav { display: flex; height: 21px; flex: none; background: #a5bfd8; border-bottom: 1px solid #445; }
    .nav > svg { flex: 1; min-width: 0; height: 20px; }
    .nav button { width: 18px; border-right: 1px solid #7f97ad; border-left: 1px solid #c8dae8; }
    .nav input { width: 53px; height: 19px; background: #fff; border: 1px solid #777; text-align: right; padding-right: 4px; font-size: 13px; color: #222; }
    .nav .zoom { width: 18px; border: 0; }
    .nav .zoom:last-child { margin-right: 2px; }
  `];

  render() {
    const s = this.spec;
    const xPct = (x: number) => `${(((x - s.origin) / 875) * 100).toFixed(2)}%`;
    const yPct = (y: number) => `${(((y - 118) / 641) * 100).toFixed(2)}%`;
    const prices = Array.from({ length: 31 }, (_, i) => (s.priceStart - i * s.priceStep).toFixed(2));
    const b = (art: unknown, name: string) => html`<button aria-label=${name}>${art}</button>`;
    return html`
      <div class="caption">
        <div class=${classMap({ tab: true, active: s.active })}>
          <span>[6102] 시뮬레이션 차트</span>
          <button aria-label="닫기">${icon(10, 10, svg`<path d="M1 1l8 8M9 1L1 9" stroke=${s.active ? "#fff" : "#999"} stroke-width="2.200"/>`)}</button>
        </div>
        <svg class="tail" width="16" height="18" viewBox="0 0 16 18">
          <path d="M0 .5h4c2 0 3 2 4 5l5 12H0z" fill=${s.active ? "#648ecb" : "#fff"}/>
          <path d="M0 .5h4c2 0 3 2 4 5l5 12" fill="none" stroke="#222"/>
        </svg>
        <span class="fill"></span>
        <div class="controls">
          <button aria-label="도움말">?</button>
          ${b(icon(8, 8, svg`<path d="M1 7h5" stroke="#aaa" stroke-width="2"/>`), "최소화")}
          ${b(icon(8, 8, svg`<path d="M.5 1h7v6.500h-7z" stroke="#000"/><path d="M0 1.500h8" stroke="#000" stroke-width="2"/>`), "최대화")}
          ${b(icon(8, 8, svg`<path d="M1 1l6 6M7 1L1 7" stroke="#000" stroke-width="1.700"/>`), "창 닫기")}
        </div>
      </div>
      <div class="body">
        <div class="main">
          <div class="tools">
            <button class="scroll" aria-label="이전">${icon(5, 8, svg`<path d="M4 0v8L0 4z" fill="#555"/>`)}</button>
            <span class="sep"></span>
            <drop-box class="w78" value="00000000" label="종목 코드"></drop-box>
            ${b(tool.search, "종목 검색")}${b(tool.searchRed, "돌아가기")}
            <span class="sep"></span>
            ${["일", "주", "월", "분"].map((p) => html`<button class=${classMap({ on: p === s.period })}>${p}</button>`)}
            <drop-box class="w45 tight" value="5" label="분 간격"></drop-box>
            <button>틱</button>
            <drop-box class="w55 tight" value="10" label="틱 간격"></drop-box>
            <span class="sep"></span>
            <drop-box class="w49" value="날짜" label="기준"></drop-box>
            <drop-box class="w86 tight" value="2021-01-01" label="시작일"></drop-box>
            <span class="tilde">~</span>
            <drop-box class="w86" value="2024-11-14" label="종료일"></drop-box>
            <span class="sep"></span>
            ${b(tool.trend, "추세")}${b(tool.barsDots, "지표")}${b(tool.bars, "봉 차트")}${b(tool.updown, "정렬")}
            <span class="sep"></span>
            ${b(tool.pageD, "데이터")}${b(tool.tvR, "중계")}${b(tool.pageR, "보고서")}${b(tool.pagesR, "보고서 모음")}
            <span class="sep"></span>
            ${b(tool.save, "저장")}${b(tool.open, "불러오기")}
          </div>
          <div class="charts">
            <div class="plot">
              <svg viewBox="${s.origin} 118 875 641" preserveAspectRatio="none" fill="none" shape-rendering="crispEdges">
                ${s.price()}
                <path d="M${s.high.ax} 149.500h14M${s.high.ax} 149.500l4 -3" stroke="#c01010"/>
                <path d="M${s.low.ax} 745.500h14M${s.low.ax + 14} 744.500l-4 3" stroke="#1010c0"/>
              </svg>
              <div class="legend main-legend">
                <span class="name">${s.symbol}</span><span>${s.date}</span>
                <span class="k lead">종</span><span class="n">${s.close}</span><span class="n red">${s.change}</span>
                ${s.ohl.map(([k, v], i) => html`<span class=${i ? "k" : "k lead"}>${k}</span><span class="n">${v}</span>`)}
              </div>
              <div class="extent"><span class="red">${s.highPct}</span><span class="blue">${s.lowPct}</span></div>
              <div class="mini">
                ${b(icon(5, 5, svg`<path d="M.5 .5h4v4h-4z" stroke="#000"/>`), "창 크기")}
                ${b(icon(5, 3, svg`<path d="M0 0h5L2.500 3z" fill="#000"/>`), "메뉴")}
              </div>
              <span class="note red" style="left:${xPct(s.high.x)};top:${yPct(s.high.y)}">${s.high.text}</span>
              <span class="note blue" style="left:${xPct(s.low.x)};top:${yPct(s.low.y)}">${s.low.text}</span>
            </div>
            <div class="axis" style="padding:${s.priceTop}px 0 10px">${prices.map((p) => html`<span>${p}</span>`)}</div>

            <div class="plot">
              <svg viewBox="${s.origin} 760 875 214" preserveAspectRatio="none" fill="none" shape-rendering="crispEdges">
                ${s.levels.map((l) => svg`<path d="M${s.origin} ${l.y + 0.5}H${s.plotEnd}" stroke=${l.c} stroke-dasharray=${l.dash ? "4 3" : "none"}/>`)}
                ${s.osc()}
                ${s.bands.map((v) => svg`<rect x=${v.x - 1} y="760" width=${v.strong ? 3 : 2} height="212" fill=${v.strong ? "#e8251c" : "#f0a8b4"} opacity=${v.strong ? 0.92 : 0.7}/>`)}
              </svg>
              <div class="legend sub">
                <span class="name">${s.ind.name}</span><span>${s.ind.date}</span><span class="n bright">${s.ind.value}</span>
                <span class="n bright">${s.ind.upper}</span><span class="n mid">${s.ind.mid}</span><span class="n deep">${s.ind.lower}</span>
              </div>
              <div class="mini">
                ${b(icon(5, 5, svg`<path d="M0 2.500h5" stroke="#000"/>`), "접기")}
                ${b(icon(5, 5, svg`<path d="M0 0l5 5M5 0L0 5" stroke="#000"/>`), "지표 닫기")}
              </div>
            </div>
            <div class="axis" style="padding:${s.indPad[0]}px 0 ${s.indPad[1]}px">
              ${s.indLabels.map((p) => html`<span>${p}</span>`)}
              ${s.badge ? html`<span class="badge">${s.badge}</span>` : nothing}
            </div>

            <div class="times">
              ${s.xTicks.map(([x, t, m]) => html`<span class=${classMap({ month: !!m })} style="left:${xPct(x)}">${t}</span>`)}
            </div>
            <div class="last"><button aria-label="확대">${icon(10, 10, svg`<circle cx="4" cy="4" r="2.500" stroke="#222" stroke-width="1.300"/><path d="M6 6l4 4" stroke="#222" stroke-width="2"/>`)}</button><span>${s.lastTime}</span></div>
          </div>
          <div class="nav">
            ${b(icon(5, 8, triangle("M4 0v8L0 4z")), "왼쪽")}
            <svg viewBox="0 0 702 20" preserveAspectRatio="none">
              <rect width="702" height="20" fill="#c0c0c0"/>
              <path d=${silhouettePath()} fill="#505050"/>
              <rect x="622" width="78" height="20" fill="#000" opacity="0.480"/>
              <path d="M622.500 1v18M699.500 1v18" stroke="#fff" stroke-width="4"/><path d="M622.500 2v16M699.500 2v16" stroke="#000" stroke-width="2"/>
            </svg>
            ${b(icon(5, 8, triangle("M0 0v8l4-4z")), "오른쪽")}
            ${b(icon(9, 8, triangle("M4 0v8L0 4zM9 0v8L5 4z")), "뒤로")}
            ${b(icon(9, 8, triangle("M0 0v8l4-4zM5 0v8l4-4z")), "앞으로")}
            <input aria-label="봉 개수" value=${s.count} />
            <button class="zoom" aria-label="넓게">${icon(12, 12, triangle("M5 0v12L0 6zM7 0v12l5-6z"))}</button>
            <button class="zoom" aria-label="좁게">${icon(12, 12, triangle("M0 0v12l5-5v5h2V7l5 5V0L7 5H5z"))}</button>
            <button class="zoom" aria-label="확대">${icon(12, 12, svg`<circle cx="6" cy="6" r="5" stroke="#000" fill="#fff"/><path d="M3 6h6M6 3v6" stroke="#000"/>`)}</button>
            <button class="zoom" aria-label="축소">${icon(12, 12, svg`<circle cx="6" cy="6" r="5" stroke="#e0e8ee"/><path d="M3 6h6" stroke="#e0e8ee" stroke-width="2"/>`)}</button>
            <button class="zoom" aria-label="맞춤">${icon(12, 12, svg`<path d="M.5 .5h11v11H.5zM3 3l6 6M9 3L3 9" stroke="#e6ecf0"/><path d="M5 3h2M5 9h2M3 5v2M9 5v2" stroke="#e6ecf0" stroke-width="2"/>`)}</button>
            <button class="zoom" aria-label="초기화">${icon(12, 12, svg`<path d="M.5 .5h11v11H.5z" fill="#fff" stroke="#000"/><path d="M2 2l8 8M10 2l-8 8" stroke="#000"/>`)}</button>
          </div>
        </div>
        <div class="drawing">
          ${drawTools.map((t) => html`<button class=${t.kind ?? ""} aria-label=${t.name}>${icon(15, 15, t.art)}</button>`)}
        </div>
      </div>`;
  }
}

/* ---------- application frame ---------- */
const quote = (v: string, c = "") => html`<span class=${c}>${v}</span>`;

@customElement("app-root")
class AppRoot extends LitElement {
  static styles = [base, css`
    :host { display: flex; flex-direction: column; height: 100vh; overflow: hidden; font-family: "Liberation Sans", "Noto Sans CJK KR", sans-serif; font-size: 12px; color: #000; background: #1f3352; }
    .title, .bar, .menu, .tasks, .ticker { flex: none; }
    .title { height: 20px; display: grid; grid-template-columns: 1fr auto 1fr; align-items: center; background: #1b345e; color: #e6ebf2; border-bottom: 1px solid #8a96ac; padding: 2px 9px 0 3px; }
    .brand { display: flex; align-items: center; gap: 2px; color: #fff; }
    .brand b { font-style: italic; font-size: 15px; line-height: 16px; font-weight: 700; }
    .brand b small { font-size: 13px; }
    .brand span { margin-left: 3px; font-family: "DejaVu Sans Mono", monospace; font-size: 12px; }
    .sys { display: flex; justify-content: flex-end; align-items: center; gap: 10px; font-size: 12px; }
    .sys span { margin-right: 3px; }
    .sys .wc { display: flex; gap: 8px; margin-left: 1px; }
    .bar { height: 31px; display: flex; align-items: center; background: linear-gradient(#8f9aae, #b9bec8 12%, #d4d5d8 45%, #d0d2d6 65%, #b4b9c2); border-top: 1px solid #e6e8ee; border-bottom: 1px solid #4d6484; padding: 0 9px 0 2px; }
    .grip { width: 5px; height: 20px; border-left: 1px solid #fff; border-right: 1px solid #fff; box-shadow: 1px 0 #777, inset 1px 0 #777; margin-right: 6px; }
    .field { position: relative; width: 84px; height: 20px; }
    .field input { width: 100%; height: 20px; background: #fff; border: 1px solid #4f6684; padding-left: 10px; font-weight: 700; font-size: 12px; font-family: "DejaVu Sans", sans-serif; }
    .field button { position: absolute; right: 2px; top: 3px; width: 13px; height: 14px; background: #ccc; border: 1px solid #666; }
    .sq { width: 21px; height: 20px; border: 1px solid #666; background: linear-gradient(#f0f0f0, #bbb); margin: 0 4px 0 2px; }
    .plus { width: 18px; background: linear-gradient(#eee, #ccc); margin: 0 0 0 2px; }
    .div { width: 2px; height: 29px; background: #fff; border-left: 1px solid #8b93a0; margin-left: 3px; }
    .fill { flex: 1; }
    .icons { display: flex; align-items: center; gap: 6px; padding: 0 8px 0 6px; }
    .screens { display: grid; grid-template-columns: repeat(3, 15px); gap: 2px 1px; margin-left: 6px; }
    .screens button { height: 11px; background: #7391c4; color: #e8eefa; border: 1px solid #274377; font: 700 10px/9px "DejaVu Sans", sans-serif; }
    .screens .hot { background: #f79a97; border-color: #b04040; color: #b01010; }
    .screens .sel { background: #d02424; border-color: #8a1010; color: #fff; }
    .menu { height: 25px; display: flex; align-items: center; gap: 16px; background: #283850; border-bottom: 1px solid #4a6286; color: #e8edf4; font-size: 13px; line-height: 18px; padding: 0 0 3px 2px; }
    .menu .grip, .tasks .grip, .ticker .grip { border-color: #7488a8; box-shadow: none; width: 4px; height: 16px; margin: 0; }
    .menu .grip { margin-right: -5px; }
    .desk { flex: 1; display: grid; grid-template-columns: 1fr 1fr; grid-template-rows: minmax(0, 1fr); margin-left: -5px; min-height: 0; }
    .tasks { height: 24px; display: flex; align-items: flex-end; gap: 3px; background: #1f3352; border-top: 1px solid #10203a; padding-left: 2px; color: #d4dded; }
    .tasks .grip { margin: 0 4px 5px 0; }
    .task { width: 94px; height: 19px; display: flex; align-items: center; justify-content: space-between; padding: 0 4px 0 5px; background: #314466; border-top: 2px solid #0b1526; border-left: 1px solid #0b1526; border-right: 1px solid #0b1526; font-size: 13px; line-height: 16px; }
    .wins { display: flex; gap: 5px; align-self: center; padding-right: 8px; }
    .ticker { display: flex; background: #14233c; border-top: 1px solid #0a1424; padding: 0 5px 0 2px; height: 40px; gap: 4px; align-items: stretch; }
    .ticker .grip { height: 34px; align-self: center; margin-right: 3px; }
    .cells { flex: 1; display: grid; grid-template-columns: repeat(4, 1fr); grid-template-rows: 18px 18px; gap: 2px 0; padding-top: 1px; }
    .cell { display: grid; grid-template-columns: 66px 1fr; border: 1px solid #4c6690; min-width: 0; }
    .cell .lab { background: #0d2654; color: #fff; font-size: 13px; line-height: 16px; padding-left: 4px; white-space: nowrap; overflow: hidden; }
    .cell .val { background: #f6f4f1; display: flex; align-items: center; padding-left: 2px; line-height: 16px; white-space: nowrap; min-width: 0; font-size: 12px; }
    .val i { width: 0; border: 5px solid transparent; border-bottom: 8px solid #d80808; border-top: 0; margin: 0 5px 0 13px; }
    .val .r { color: #c01414; } .val .bl { color: #1458c8; } .val .gap { margin-left: 14px; } .val .k { margin: 0 8px 0 1px; font-size: 13px; } .val .k2 { margin: 0 8px 0 14px; font-size: 13px; }
    .val .news { font-size: 13px; }
    .val .dd { width: 11px; height: 14px; border: 1px solid #aaa; background: #f2f0ec; margin-right: 1px; }
    .val .order { border: 1px solid #bbb; color: #b8b8b8; height: 14px; line-height: 12px; padding: 0 2px; margin-right: 2px; }
    .meter { display: flex; }
    .meter span { display: block; height: 16px; }
    .m-r { background: linear-gradient(#ff6060, #ff3c3c 45%, #f00000 50%, #f00000 70%, #ff3838); }
    .m-g { background: linear-gradient(#20e030, #18d028 45%, #00a810 50%, #20d030); }
    .m-b { background: linear-gradient(#3838ff, #2020ec 45%, #0000c0 50%, #0000c0 70%, #2828e8); }
    .acts { display: flex; gap: 2px; padding-top: 1px; }
    .acts button { width: 24px; height: 38px; flex-direction: column; gap: 5px; background: linear-gradient(#24406c, #1b3358); border: 1px solid #33507e; color: #e8edf6; font-size: 11px; line-height: 14px; }
  `];

  private meter(r: number, g: number, b: number) {
    return html`<div class="meter"><span class="m-r" style="flex:${r}"></span><span class="m-g" style="flex:${g}"></span><span class="m-b" style="flex:${b}"></span></div>`;
  }

  private index(name: string, price: string, diff: string, pct: string, vol: string, drop = false) {
    return html`<div class="cell"><span class="lab">${name}</span><div class="val">
      ${quote(price, "r")}<i></i>${quote(diff, "r")}${quote(`${pct} %`, "r gap")}${quote(vol, "gap")}
      ${drop ? html`<span class="fill"></span><button class="dd" aria-label="종목 선택">${icon(7, 4, svg`<path d="M0 0h7L3.500 4z" fill="#888"/>`)}</button>` : nothing}
    </div></div>`;
  }

  private flow(name: string, items: [string, string, string][]) {
    return html`<div class="cell"><span class="lab">${name}</span><div class="val">
      ${items.map(([k, v, c], i) => html`<span class=${i ? "k2" : "k"}>${k}</span><span class=${c}>${v}</span>`)}</div></div>`;
  }

  render() {
    const caret = icon(7, 4, svg`<path d="M0 0h7L3.500 4z" fill="#222"/>`);
    return html`
      <header class="title">
        <div class="brand">
          ${icon(13, 16, svg`<path d="M0 3c2 1 4 3 5 7 1-5 3-8 7-10-3 4-5 9-5 15H5C4 9 3 6 0 3z" fill="#fff"/>`)}
          <b>Yes <small>TRADER</small></b><span>[xys002]</span>
        </div>
        <span>고객만족센터 1588-7171</span>
        <div class="sys">
          <span>PM(서버):05:49:32</span>
          ${icon(12, 11, svg`<path d="M6 0l6 5.500h-2V11H2V5.500H0z" fill="#fff"/><rect x="4.500" y="6" width="3" height="3" fill="#1b345e"/>`)}
          ${icon(12, 11, svg`<path d="M1 1h9v6H1z" stroke="#fff" stroke-width="2"/><path d="M3 4h5M2 10h7" stroke="#fff" stroke-width="2"/>`)}
          <div class="wc">
            ${icon(9, 11, svg`<path d="M0 9h8" stroke="#dde3ec" stroke-width="3"/>`)}
            ${icon(9, 11, svg`<path d="M3 4V2h5v4H6M1 5h5v4H1z" stroke="#dde3ec" stroke-width="1.300"/>`)}
            ${icon(9, 11, svg`<path d="M1 2l7 7M8 2L1 9" stroke="#dde3ec" stroke-width="1.800"/>`)}
          </div>
        </div>
      </header>
      <div class="bar">
        <span class="grip"></span>
        <div class="field"><input aria-label="화면 번호" value="1103" /><button aria-label="목록">${caret}</button></div>
        <button class="sq" aria-label="화면 검색">${icon(17, 17, svg`<circle cx="7" cy="7" r="5" fill="#e8f0f4" stroke="#333" stroke-width="1.200"/><path d="M10.500 10.500l5 5" stroke="#222" stroke-width="3"/>`)}</button>
        <div class="field"><input aria-label="종목 검색" value="" /><button aria-label="종목 목록">${caret}</button></div>
        <span class="div"></span>
        <button class="sq plus" aria-label="추가">${icon(9, 9, svg`<path d="M0 4.500h9M4.500 0v9" stroke="#333" stroke-width="2"/>`)}</button>
        <span class="fill"></span>
        <span class="div"></span>
        <div class="icons">
          ${icon(6, 8, svg`<path d="M1 0v8l4-4z" fill="#333"/>`)}
          ${icon(22, 24, svg`<g transform="translate(3 2)"><circle cx="8" cy="10" r="5.500" stroke="#3c4f70" stroke-width="5"/><circle cx="8" cy="10" r="8.500" stroke="#3c4f70" stroke-width="3" stroke-dasharray="3.300 3.380"/></g>`)}
          ${icon(26, 24, svg`<path d="M7 2c3 0 3 4 1 7l2 2v8l-4 3-4-2v-7l3-2c-1-4-1-9 2-9z" fill="#eee" stroke="#555"/><circle cx="6" cy="17" r="4" fill="#ccc" stroke="#444"/><path d="M12 5h12v16H12z" fill="#e6f2fa" stroke="#3e6e9c"/><path d="M16 9h6M16 12h6M16 15h6M16 18h4" stroke="#3e78ac"/><path d="M12 7v13" stroke="#2a58b8" stroke-width="3" stroke-dasharray="2 2"/><path d="M14 3h6v4h-6z" fill="#49a080"/>`)}
          ${icon(25, 24, svg`<rect x="1" y="2" width="23" height="16" fill="#3c5078"/><rect x="3" y="4" width="19" height="12" fill="#4c84d8"/><path d="M3 16c4-7 10-10 19-11v11z" fill="#7aaaf0"/><path d="M10 18h5v3h4v2H6v-2h4z" fill="#2b3c58"/>`)}
          ${icon(24, 24, svg`<rect x="1" y="1" width="22" height="22" rx="1" fill="#3f8a78" stroke="#2a6656"/><rect x="4" y="4" width="16" height="16" fill="#d6ece4"/><path d="M6 6h5v5H6z" fill="#2080c0"/><path d="M13 6h5v5h-5z" fill="#e07808"/><path d="M6 13h5v5H6z" fill="#10c8c8"/><path d="M13 13h5v5h-5z" fill="#90d010"/>`)}
          ${icon(25, 24, svg`<path d="M1 2h23v20H1z" fill="#dfe5ee" stroke="#44587c"/><path d="M1 2h23v5H1z" fill="#f6f8fa" stroke="#44587c"/><path d="M5 3h4M16 3h4" stroke="#44587c" stroke-width="2"/><rect x="2" y="8" width="21" height="13" fill="#7790c0"/><circle cx="12.500" cy="15" r="6" fill="#fff"/><circle cx="12.500" cy="15" r="3.500" fill="#b4c2de"/>`)}
          ${icon(26, 24, svg`<path d="M6 2h13v8H6z" fill="#c4d0dc" stroke="#4c5e78"/><rect x="1" y="9" width="24" height="9" rx="2" fill="#d2d8e0" stroke="#4c5e78"/><path d="M5 12h16" stroke="#4c5e78" stroke-width="2"/><path d="M5 16h16v6H5z" fill="#eef2f6" stroke="#4c5e78"/><path d="M7 19h12" stroke="#9aa8b8"/>`)}
        </div>
        <span class="div"></span>
        <div class="screens">${[1, 2, 3, 4, 5, 6].map((n) => html`<button class=${n === 1 ? "hot" : n === 2 ? "sel" : ""}>${n}</button>`)}</div>
      </div>
      <nav class="menu"><span class="grip"></span>
        ${["관리", "계좌정보", "주문", "시세/분석", "시스템트레이딩", "차트쉐어", "고객가이드"].map((m) => html`<a href="#">${m}</a>`)}
      </nav>
      <main class="desk">
        <chart-window .spec=${daily}></chart-window>
        <chart-window .spec=${minute}></chart-window>
      </main>
      <div class="tasks"><span class="grip"></span>
        ${[0, 1].map(() => html`<div class="task"><span>시뮬레이</span><button aria-label="닫기">${icon(8, 8, svg`<path d="M1 1l6 6M7 1L1 7" stroke="#8496b4" stroke-width="1.400"/>`)}</button></div>`)}
        <span class="fill"></span>
        <div class="wins">
          ${icon(12, 12, svg`<path d="M2.500 9H.5V.5H9v2" stroke="#ccc"/><path d="M3 3h8.500v8.500H3z" fill="#ddd" stroke="#eee"/><path d="M4 6h2M7 6h4M4 9h2M7 9h4" stroke="#333"/>`)}
          ${icon(12, 12, svg`<path d="M1 1h10v10H1z" fill="#222" stroke="#ddd" stroke-width="1.500"/><path d="M3 4h6M3 6h6M3 8h6" stroke="#ddd"/>`)}
          ${icon(12, 12, svg`<path d="M2 2l8 8M10 2l-8 8" stroke="#fff" stroke-width="2.200"/>`)}
        </div>
      </div>
      <footer class="ticker"><span class="grip"></span>
        <div class="cells">
          <div class="cell"><span class="lab">KP 종합</span>${this.meter(256, 15, 119)}</div>
          ${this.index("KP 종합", "2,469.07", "52.21", "2.16", "43,121만")}
          ${this.index("KQ 종합", "689.55", "4.13", "0.60", "84,324만")}
          ${this.index("삼성전자우", "48,800", "2,900", "6.32", "416만", true)}
          <div class="cell"><span class="lab">KQ 종합</span>${this.meter(235, 17, 138)}</div>
          ${this.flow("[풋:금액]", [["외", "-13", "bl"], ["개", "-4", "bl"], ["기", "18", "r"]])}
          ${this.flow("프로그램", [["전", "-335,360", "bl"], ["차", "32,977", "r"], ["비", "-368,337", "bl"]])}
          <div class="cell"><span class="lab">한국경제</span><div class="val"><span class="news">고려아연 전구체 원천기술, 국가핵심기술 지정됐다</span><span class="fill"></span>
            <button class="order">주문</button><button class="dd" aria-label="뉴스 선택">${icon(7, 4, svg`<path d="M0 0h7L3.500 4z" fill="#888"/>`)}</button></div></div>
        </div>
        <div class="acts">
          <button>${icon(13, 13, svg`<circle cx="6.500" cy="6.500" r="3.500" stroke="#e8edf6" stroke-width="2"/><circle cx="6.500" cy="6.500" r="5.500" stroke="#e8edf6" stroke-width="2" stroke-dasharray="2 2.300"/>`)}<span>설정</span></button>
          <button>${icon(13, 13, svg`<path d="M2 .5h9v12H2z" stroke="#e8edf6" stroke-width="1.300"/><path d="M4 3.500h5M4 5.500h5M4 7.500h5M4 9.500h5" stroke="#e8edf6"/>`)}<span>체결</span></button>
          <button>${icon(16, 13, svg`<path d="M8 11H3V3M8 2h5v8" stroke="#e8edf6" stroke-width="1.500"/><path d="M0 5l3-4 3 4zM10 8l3 4 3-4z" fill="#e8edf6"/>`)}<span>자동</span></button>
        </div>
      </footer>`;
  }
}
